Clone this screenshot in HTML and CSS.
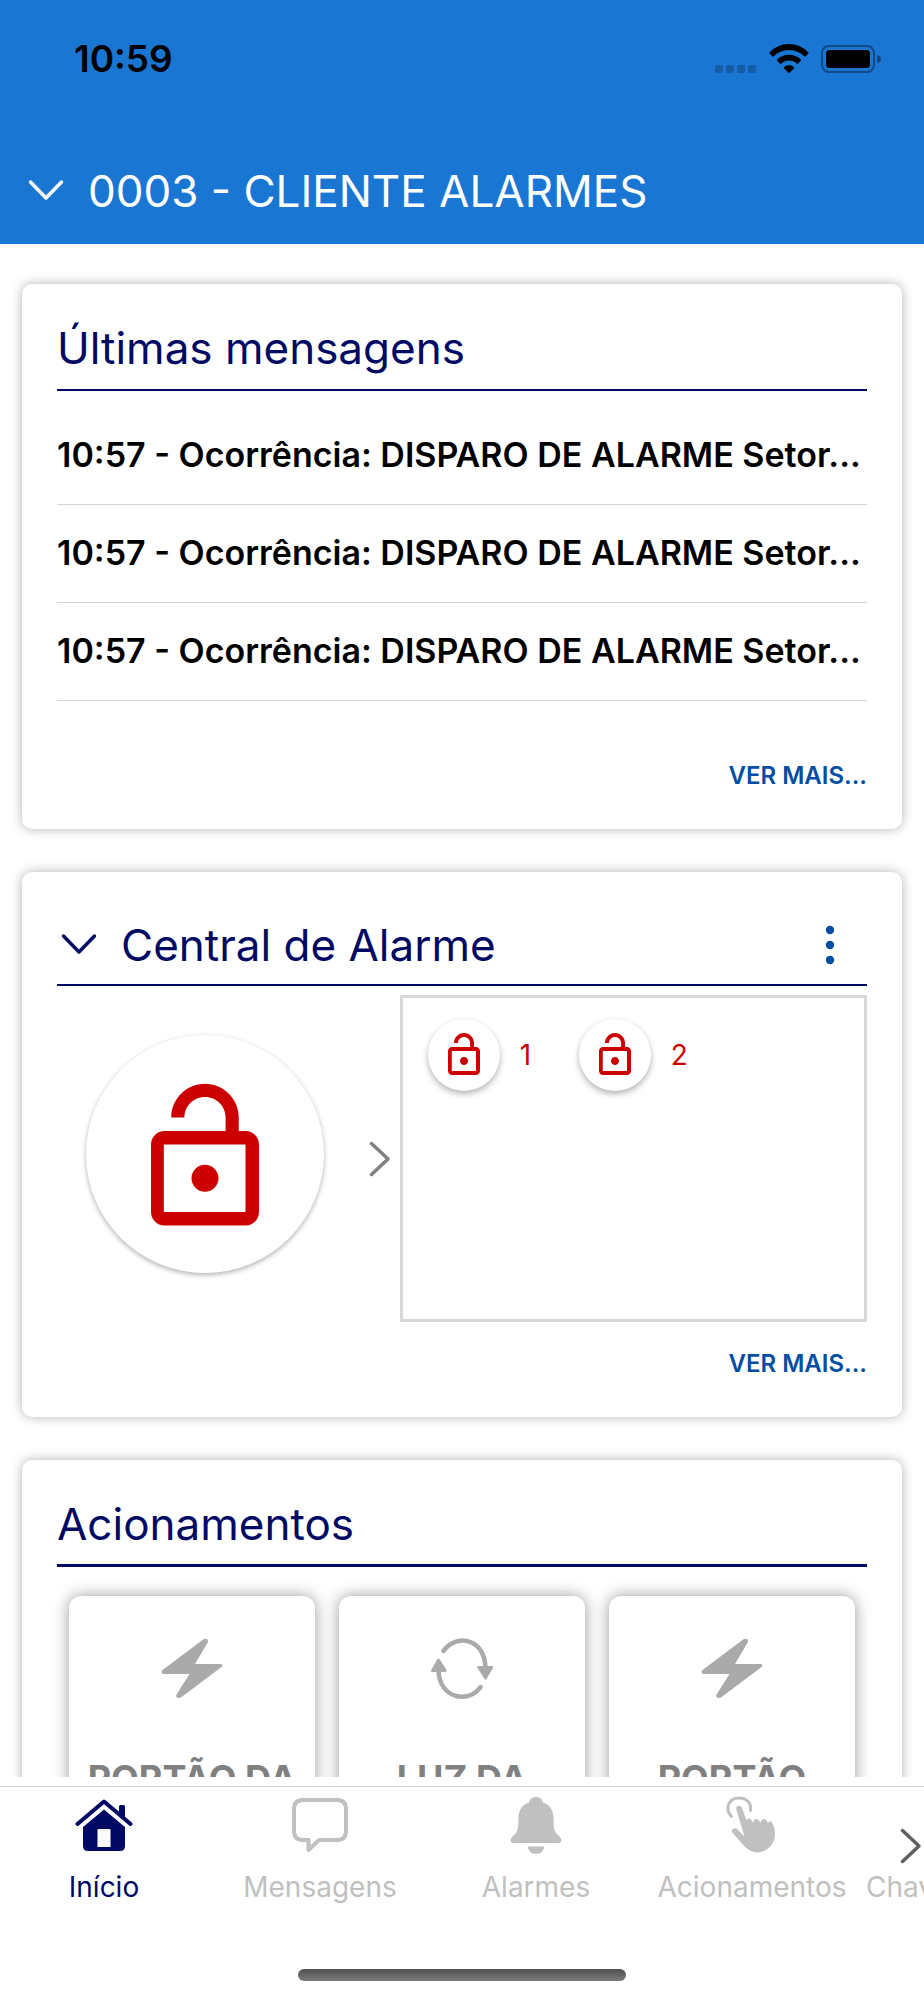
FILE: index.html
```html
<!DOCTYPE html>
<html lang="pt-BR">
<head>
<meta charset="utf-8">
<meta name="viewport" content="width=device-width, initial-scale=1">
<title>Início</title>
<link rel="stylesheet" href="styles.css">
</head>
<body>
<svg class="defs" aria-hidden="true">
  <symbol id="lock" viewBox="0 0 24 24"><path fill="currentColor" d="M12 17c1.1 0 2-.9 2-2s-.9-2-2-2-2 .9-2 2 .9 2 2 2zm6-9h-1V6c0-2.76-2.24-5-5-5S7 3.24 7 6h1.95c0-1.71 1.34-3.05 3.05-3.05S15.050 4.290 15.050 6v2H6c-1.100 0-2 .9-2 2v10c0 1.100.9 2 2 2h12c1.100 0 2-.9 2-2V10c0-1.100-.9-2-2-2zm0 12H5.900V10H18v10z"/></symbol>
  <symbol id="down" viewBox="0 0 36 24"><path fill="none" stroke="currentColor" stroke-width="3.500" stroke-linecap="round" stroke-linejoin="round" d="M2.500 3 18 19 33.500 3"/></symbol>
  <symbol id="right" viewBox="0 0 22 36"><path fill="none" stroke="currentColor" stroke-width="3.500" stroke-linecap="round" stroke-linejoin="round" d="M2.500 2.500 19 18 2.500 33.500"/></symbol>
  <symbol id="bolt" viewBox="0 0 62 62"><path fill="currentColor" d="M42.500 1.200Q47.500-.3 47 4L34 26H60Q62.500 27 60.500 29L20 59.500Q14.500 61 15.200 57L28.500 36H2Q-.5 34.500 1.500 32Z"/></symbol>
</svg>
<header class="top">
  <div class="status">
    <time class="clock">10:59</time>
    <div class="signals">
      <svg width="42" height="10" viewBox="0 0 42 10" fill="#145ca6"><rect width="8" height="8" rx="2"/><rect x="11" width="8" height="8" rx="2"/><rect x="22" width="8" height="8" rx="2"/><rect x="33" width="8" height="8" rx="2"/></svg>
      <svg width="40" height="31" viewBox="0 0 40 31"><path fill="#000" d="M20 0C12.500 0 5.500 3.200.8 8.200Q0 9 .8 9.800L3.200 12.200Q4 13 4.800 12.200C8.800 8.300 14 6 20 6S31.200 8.300 35.200 12.200Q36 13 36.800 12.200L39.200 9.800Q40 9 39.200 8.200C34.500 3.200 27.500 0 20 0ZM20 10.700C15.600 10.700 11.500 12.400 8.400 15.200Q7.500 16 8.300 16.800L10.900 19.400Q11.700 20.100 12.500 19.400C14.500 17.600 17.100 16.600 20 16.600S25.500 17.600 27.500 19.400Q28.300 20.100 29.100 19.400L31.700 16.800Q32.500 16 31.600 15.200C28.500 12.400 24.400 10.700 20 10.700ZM20 21.300C18.200 21.300 16.500 21.900 15.200 22.900Q14.300 23.600 15.100 24.400L19.200 28.500Q20 29.300 20.800 28.500L24.900 24.400Q25.700 23.600 24.800 22.900C23.500 21.900 21.800 21.300 20 21.300Z"/></svg>
      <svg width="60" height="31" viewBox="0 0 60 31"><rect x="1" y="2" width="52" height="26" rx="7" fill="none" stroke="#104a86" stroke-width="2"/><rect x="5" y="6" width="44" height="18" rx="3.500"/><path fill="#104a86" d="M56 11Q60 11.500 60 15T56 19Z"/></svg>
    </div>
  </div>
  <button class="client" type="button"><svg class="down"><use href="#down"/></svg><span>0003 - CLIENTE ALARMES</span></button>
</header>
<main class="feed">
  <section class="card">
    <h2 class="title">Últimas mensagens</h2>
    <ul class="messages">
      <li>10:57 - Ocorrência: DISPARO DE ALARME Setor...</li>
      <li>10:57 - Ocorrência: DISPARO DE ALARME Setor...</li>
      <li>10:57 - Ocorrência: DISPARO DE ALARME Setor...</li>
    </ul>
    <a class="more" href="#mensagens">VER MAIS...</a>
  </section>
  <section class="card">
    <div class="title title-bar">
      <button class="toggle" type="button" aria-label="Recolher"><svg class="down"><use href="#down"/></svg></button>
      <h2>Central de Alarme</h2>
      <button class="kebab" type="button" aria-label="Opções"><svg width="10" height="40" viewBox="0 0 10 40" fill="#034ea2"><circle cx="5" cy="5" r="4.200"/><circle cx="5" cy="20" r="4.200"/><circle cx="5" cy="35" r="4.200"/></svg></button>
    </div>
    <div class="alarm">
      <div class="panel">
        <div class="panel-main">
          <button class="lock lock-large" type="button" aria-label="Central desarmada"><svg><use href="#lock"/></svg></button>
        </div>
        <svg class="right"><use href="#right"/></svg>
      </div>
      <div class="sectors">
        <div class="sector"><button class="lock" type="button" aria-label="Setor 1"><svg><use href="#lock"/></svg></button><span>1</span></div>
        <div class="sector"><button class="lock" type="button" aria-label="Setor 2"><svg><use href="#lock"/></svg></button><span>2</span></div>
      </div>
    </div>
    <a class="more more-close" href="#central">VER MAIS...</a>
  </section>
  <section class="card card-actions">
    <h2 class="title title-strong">Acionamentos</h2>
    <div class="actions">
      <button class="action" type="button"><svg><use href="#bolt"/></svg><span>PORTÃO DA</span></button>
      <button class="action" type="button"><svg viewBox="0 0 62 62"><g fill="none" stroke="currentColor" stroke-width="4.500" stroke-linecap="round"><path d="M12.500 13C24-4 53-1 54.500 29"/><path d="M49.500 49C38 66 8 61 7.500 32"/></g><path fill="currentColor" d="M47 28H61Q62.500 28 62 30L55.500 41Q54.500 42 53.500 41L46.500 30Q46 28 47 28ZM1 34H14Q16 34 15.500 32L8.500 21Q7.500 20 6.500 21L.2 32Q-.5 34 1 34Z"/></svg><span>LUZ DA</span></button>
      <button class="action" type="button"><svg><use href="#bolt"/></svg><span>PORTÃO</span></button>
    </div>
  </section>
</main>
<footer class="bottom">
  <nav class="tabs">
    <div class="tab-list">
      <a class="tab active" href="#inicio"><svg viewBox="0 0 58 58"><path fill="none" stroke="currentColor" stroke-width="4" stroke-linecap="round" stroke-linejoin="round" d="M2.500 28 29 5.500 55.500 28"/><path fill="currentColor" d="M44 10.500Q44 9 45.500 9H48.500Q50 9 50 10.500V23L44 18ZM29 13.500 50 31V50Q50 55 45 55H13Q8 55 8 50V31ZM23.500 33Q22.500 33 22.500 34V51H35.500V34Q35.500 33 34.500 33Z"/></svg><span>Início</span></a>
      <a class="tab" href="#mensagens"><svg viewBox="0 0 58 58"><path fill="none" stroke="currentColor" stroke-width="4" stroke-linejoin="round" d="M12 4H46Q55 4 55 13V35Q55 44 46 44H28L17.500 54V44H12Q3 44 3 35V13Q3 4 12 4Z"/></svg><span>Mensagens</span></a>
      <a class="tab" href="#alarmes"><svg viewBox="0 0 58 58"><path fill="currentColor" d="M22 6.500C23 2.500 26 1 29 1S35 2.500 36 6.500C43 9 46 14 46.500 21C47 28 46 33 49 37C51 39.500 54 41 54.500 44Q54.500 47 51.500 47H6.500Q3.500 47 3.500 44C4 41 7 39.500 9 37C12 33 11 28 11.500 21C12 14 15 9 22 6.500ZM21 50.500H37C37 55 33.500 58 29 58S21 55 21 50.500Z"/></svg><span>Alarmes</span></a>
      <a class="tab" href="#acionamentos"><svg viewBox="0 0 58 58"><path fill="none" stroke="currentColor" stroke-width="3" stroke-linecap="round" d="M8.500 20.500C1 12 6 2 16 2C24 2 29 8 27.500 14.500"/><path fill="currentColor" d="M13.500 14C12 9 17.500 8.500 19 12L23.500 24C25 21.500 28.500 22 30 27C31 21.500 35.500 21.500 37.500 27C38.500 21.500 43 22 45 27C46.500 23.500 49.500 26 50.500 30C54.500 41 50 50 43 54C36 58 28 57 22 51L10.500 38C6.500 34 11 30 14.500 33.500L21.500 40.500Z"/></svg><span>Acionamentos</span></a>
      <a class="tab tab-last" href="#chaves"><span>Chaves</span></a>
    </div>
    <button class="next" type="button" aria-label="Mais abas"><svg class="right"><use href="#right"/></svg></button>
  </nav>
  <div class="home-bar"></div>
</footer>
</body>
</html>
```
FILE: styles.css
```css
* { box-sizing: border-box; }
body {
  margin: 0;
  height: 100vh;
  display: flex;
  flex-direction: column;
  overflow: hidden;
  background: #fff;
  color: #000;
  font-family: Inter, "Liberation Sans", sans-serif;
}
h2, ul { margin: 0; padding: 0; font: inherit; list-style: none; }
button { margin: 0; padding: 0; border: 0; background: none; color: inherit; font: inherit; }
a { color: inherit; text-decoration: none; }
svg { display: block; flex: none; }
.defs { position: absolute; width: 0; height: 0; }
.down { width: 36px; height: 24px; }
.right { width: 22px; height: 36px; }

.top { flex: none; background: #1976d2; }
.status {
  display: flex;
  justify-content: space-between;
  align-items: center;
  padding: 36px 43px 36px 74px;
}
.clock { font-size: 37px; line-height: 46px; font-weight: 600; }
.signals { display: flex; align-items: flex-end; gap: 12px; }
.client {
  display: flex;
  align-items: center;
  gap: 24px;
  padding: 43px 28px 23px;
  color: #fff;
  font-size: 44px;
  line-height: 60px;
  font-weight: 400;
}

.feed {
  flex: 1;
  min-height: 0;
  overflow: hidden;
  display: flex;
  flex-direction: column;
  gap: 43px;
  padding: 40px 22px 0;
}
.card {
  flex: none;
  display: flex;
  flex-direction: column;
  padding: 34px 35px;
  border-radius: 10px;
  background: #fff;
  box-shadow: 0 0 12px rgba(0, 0, 0, .3);
}
.title {
  padding: 0 0 11px;
  border-bottom: 2px solid #000a64;
  color: #000a64;
  font-size: 44px;
  line-height: 60px;
  font-weight: 400;
}
.title-bar { display: flex; align-items: center; gap: 24px; padding: 9px 32px 9px 4px; }
.title-strong { padding-bottom: 10px; border-bottom-width: 3px; }
.kebab { margin-left: auto; }
.messages { padding-top: 16px; }
.messages li {
  padding: 24px 0 25px;
  border-bottom: 1px solid #d4d4d4;
  font-size: 34px;
  line-height: 48px;
  font-weight: 600;
  white-space: nowrap;
  overflow: hidden;
  text-overflow: ellipsis;
}
.more {
  align-self: flex-end;
  margin-top: 56px;
  color: #034ea2;
  font-size: 24px;
  line-height: 38px;
  font-weight: 600;
}
.more-close { margin-top: 23px; }

.alarm { display: grid; grid-template-columns: 11fr 15fr; padding-top: 9px; }
.panel { display: flex; align-items: center; padding-right: 9px; color: #808080; }
.panel-main { flex: 1; display: flex; justify-content: center; padding: 0 16px 9px 0; }
.lock {
  flex: none;
  display: grid;
  place-items: center;
  width: 72px;
  height: 72px;
  border-radius: 50%;
  background: #fff;
  color: #c00;
  box-shadow: 0 3px 6px rgba(0, 0, 0, .3);
}
.lock svg { width: 48px; height: 48px; }
.lock-large { width: 238px; height: 238px; padding-top: 8px; box-shadow: 0 2px 5px rgba(0, 0, 0, .3); }
.lock-large svg { width: 162px; height: 162px; }
.sectors {
  display: flex;
  align-items: flex-start;
  min-height: 327px;
  padding: 21px 25px;
  border: 3px solid #d8d8d8;
}
.sector {
  width: 151px;
  display: flex;
  align-items: center;
  gap: 20px;
  color: #c00;
  font-size: 28px;
  font-weight: 400;
}

.card-actions { padding-bottom: 0; }
.actions { display: grid; grid-template-columns: repeat(3, 1fr); gap: 24px; padding: 29px 12px 0; }
.action {
  display: flex;
  flex-direction: column;
  align-items: center;
  gap: 58px;
  min-height: 260px;
  padding: 42px 10px;
  border-radius: 12px;
  background: #fff;
  box-shadow: 0 0 16px rgba(0, 0, 0, .4);
  color: #aaa;
}
.action svg { width: 62px; height: 62px; }
.action span { color: #808080; font-size: 36px; line-height: 40px; font-weight: 700; white-space: nowrap; }

.bottom { flex: none; padding-top: 9px; background: #fff; }
.tabs {
  position: relative;
  overflow: hidden;
  border-top: 1px solid #d4d4d4;
  padding-top: 9px;
  color: #c0c0c0;
}
.tab-list { display: flex; margin-left: -4px; }
.tab {
  flex: 0 0 216px;
  display: flex;
  flex-direction: column;
  align-items: center;
  gap: 13px;
  font-size: 28px;
  line-height: 40px;
}
.tab svg { width: 58px; height: 58px; }
.tab.active { color: #000a64; }
.tab-last { align-items: flex-start; justify-content: flex-end; padding-left: 6px; }
.next { position: absolute; right: 2px; top: 41px; color: #606060; }
.home-bar {
  width: 328px;
  height: 12px;
  margin: 62px auto 19px;
  border-radius: 6px;
  background: linear-gradient(#505050, #7c7c7c);
}
```
